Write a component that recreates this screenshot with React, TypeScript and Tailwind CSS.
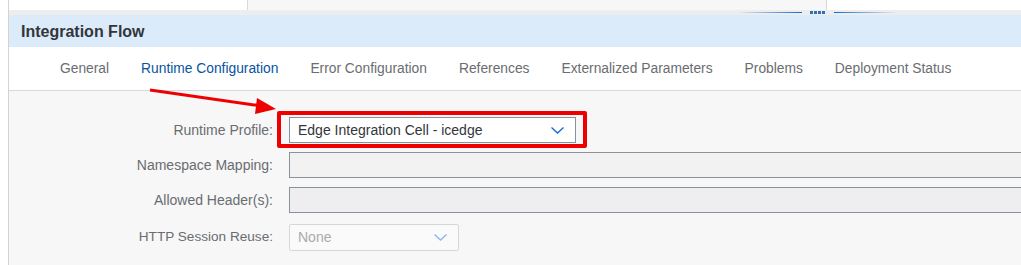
import React from "react";

const tabs = [
  "General",
  "Runtime Configuration",
  "Error Configuration",
  "References",
  "Externalized Parameters",
  "Problems",
  "Deployment Status",
];

function Chevron({ className }: { className?: string }) {
  return (
    <svg width="13" height="7" viewBox="0 0 13 7" className={className} fill="none">
      <path d="M0.5 0.5 L6.5 6 L12.5 0.5" stroke="currentColor" strokeWidth="1.3" />
    </svg>
  );
}

export default function App() {
  return (
    <div
      className="relative h-[265px] w-[1021px] overflow-hidden bg-white pl-[8px]"
      style={{ fontFamily: '"Liberation Sans", Arial, sans-serif' }}
    >
      <div className="flex h-full flex-col border-l border-[#d3d3d3]">
        {/* top panels */}
        <div className="flex h-[10px]">
          <div className="w-[239px] border-r border-[#d9d9d9] bg-white" />
          <div className="w-[579px] border-r border-[#d9d9d9] bg-[#f7f7f7]" />
          <div className="flex-1 bg-white" />
        </div>

        {/* splitter */}
        <div className="flex h-[5px] items-center bg-[#ededed]">
          <div className="ml-[728px] h-[1px] w-[65px] bg-gradient-to-r from-transparent to-[#0a6ed1]" />
          <div className="ml-[8px] flex gap-[1px]">
            <span className="h-[3px] w-[3px] bg-[#2f6fb5]" />
            <span className="h-[3px] w-[3px] bg-[#2f6fb5]" />
            <span className="h-[3px] w-[3px] bg-[#2f6fb5]" />
            <span className="h-[3px] w-[3px] bg-[#2f6fb5]" />
          </div>
          <div className="ml-[9px] h-[1px] w-[63px] bg-gradient-to-r from-[#0a6ed1] to-transparent" />
        </div>

        {/* header */}
        <div className="flex h-[32px] items-center bg-[#dcebfa] pl-[12px] pt-[1px]">
          <span className="text-[16px] font-bold text-[#32363a]">Integration Flow</span>
        </div>

        {/* tabs */}
        <div className="flex h-[44px] items-center gap-[32px] border-b border-[#d9d9d9] bg-white pl-[51px] pt-[2px]">
          {tabs.map((t) => (
            <span
              key={t}
              className={
                t === "Runtime Configuration"
                  ? "text-[13.8px] text-[#0854a0]"
                  : "text-[13.8px] text-[#6a6d70]"
              }
            >
              {t}
            </span>
          ))}
        </div>

        {/* form */}
        <div className="flex-1 bg-[#f7f7f7] pt-[26px]">
          <div className="grid grid-cols-[264px_1fr] items-center gap-x-[16px] gap-y-[9px]">
            <span className="text-right text-[14px] text-[#6a6d70]">Runtime Profile:</span>
            <div className="relative">
              <div className="flex h-[26px] w-[287px] items-center justify-between border border-[#89919a] bg-white pl-[8px] pr-[11px]">
                <span className="text-[14px] text-[#32363a]">Edge Integration Cell - icedge</span>
                <Chevron className="text-[#0a6ed1]" />
              </div>
              <div className="absolute left-[-12px] top-[-6px] h-[37px] w-[310px] rounded-[2px] border-4 border-[#ee0000]" />
            </div>

            <span className="text-right text-[14px] text-[#6a6d70]">Namespace Mapping:</span>
            <div className="-mr-[20px] h-[26px] border border-[#89919a] bg-[#f2f2f2]" />

            <span className="text-right text-[14px] text-[#6a6d70]">Allowed Header(s):</span>
            <div className="-mr-[20px] h-[26px] border border-[#89919a] bg-[#eeeef0]" />

            <span className="mt-[2px] text-right text-[13.6px] text-[#6a6d70]">HTTP Session Reuse:</span>
            <div className="mt-[2px] flex h-[27px] w-[170px] items-center justify-between rounded-[2px] border border-[#d5d7da] bg-[#fafafa] pl-[8px] pr-[11px]">
              <span className="text-[14px] text-[#a9abad]">None</span>
              <Chevron className="text-[#8ab6e3]" />
            </div>
          </div>
        </div>
      </div>

      {/* annotation arrow */}
      <svg className="pointer-events-none absolute left-0 top-0" width="1021" height="265">
        <line x1="150" y1="90" x2="262" y2="106" stroke="#ee0000" strokeWidth="3" />
        <polygon points="276,109 257,98 255,114" fill="#ee0000" />
      </svg>
    </div>
  );
}
